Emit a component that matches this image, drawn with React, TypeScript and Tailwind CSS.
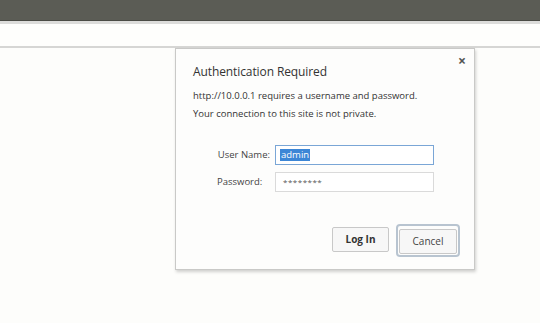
import React from 'react';

const font = { fontFamily: '"Open Sans", "Noto Sans", sans-serif' };

export default function App() {
  return (
    <div className="w-[540px] h-[323px] bg-[#fdfdfb] overflow-hidden flex flex-col" style={font}>
      {/* Window chrome */}
      <div className="h-[21px] bg-[#5b5c55] border-b border-[#4a4b45]" />
      <div className="h-[3px] bg-[#dcdcda]" />
      <div className="h-[22px] bg-[#fefefc]" />
      <div className="h-[2px] bg-[#d6d6d4]" />

      {/* Page */}
      <div className="flex-1 pl-[175px]">
        <div className="w-[300px] h-[222px] bg-[#fdfdfc] border border-[#c9c9c7] shadow-[1px_2px_3px_rgba(0,0,0,0.18)] relative px-[17px] pt-[14px]">
          <span className="absolute right-[8px] top-[5px] text-[14px] font-bold text-[#555] leading-none">×</span>
          <div className="text-[12px] text-[#333] leading-[17px] tracking-[-0.1px]">Authentication Required</div>
          <div className="mt-[10px] text-[9.5px] text-[#333] leading-[12px]">
            http://10.0.0.1 requires a username and password.
          </div>
          <div className="mt-[6px] text-[9.5px] text-[#333] leading-[12px]">
            Your connection to this site is not private.
          </div>

          <div className="mt-[25px] flex flex-col gap-[7px]">
            <div className="flex items-center">
              <span className="w-[82px] text-right pr-[5px] text-[9.5px] text-[#444]">User Name:</span>
              <div className="w-[159px] h-[20px] border border-[#7aa6d6] bg-white flex items-center pl-[4px]">
                <span className="bg-[#3c86d6] text-white text-[9.5px] leading-[12px] px-[1px]">admin</span>
              </div>
            </div>
            <div className="flex items-center">
              <span className="w-[82px] text-left pl-[24px] text-[9.5px] text-[#444]">Password:</span>
              <div className="w-[159px] h-[20px] border border-[#dadada] bg-white flex items-center pl-[7px]">
                <span className="text-[8px] text-[#555] tracking-[0.5px] leading-none">********</span>
              </div>
            </div>
          </div>

          <div className="mt-[35px] flex justify-end gap-[7px]">
            <button className="w-[57px] h-[25px] bg-[#f7f7f7] border border-[#c8c8c8] rounded-[2px] text-[10px] font-bold text-[#333]">
              Log In
            </button>
            <div className="rounded-[4px] border-2 border-[#b8c4d0] p-[1px] -mt-[3px] -mr-[3px]">
              <button className="w-[58px] h-[25px] bg-[#f7f7f7] border border-[#c8c8c8] rounded-[2px] text-[10px] text-[#444]">
                Cancel
              </button>
            </div>
          </div>
        </div>
      </div>
    </div>
  );
}
